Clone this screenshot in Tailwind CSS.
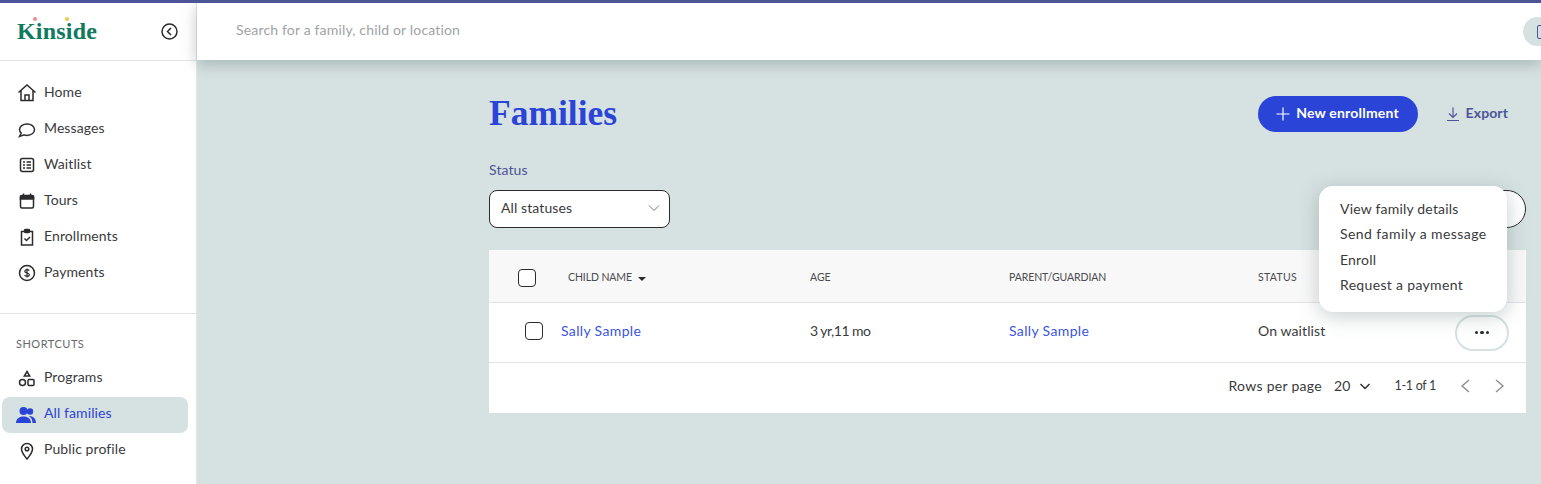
<!DOCTYPE html>
<html lang="en">
<head>
  <meta charset="UTF-8" />
  <title>Kinside - Families</title>
  <script src="https://cdn.jsdelivr.net/npm/@tailwindcss/browser@4"></script>
</head>
<body class="h-[484px] w-[1541px] overflow-hidden bg-[#d6e1e1] font-['Lato','Liberation_Sans',sans-serif] text-[14px] tracking-[0.1px] text-[#3a3a3c]">
  <div class="h-[3px] bg-[#4c5599]"></div>
  <div class="flex h-[481px]">
    <!-- Sidebar -->
    <aside class="w-[197px] shrink-0 border-r border-[#e3e7e8] bg-white">
      <div class="flex h-[58px] items-center justify-between border-b border-[#e0e4e6] pl-[17px] pr-[18px]">
        <div class="relative pb-[1px] font-['Liberation_Serif',serif] text-[24px] font-bold leading-none tracking-[0.2px] text-[#0f7a5d]">
          Kinside
          <span class="absolute left-[16px] top-[-2px] h-[4px] w-[4px] rounded-full bg-[#f08a8a]"></span>
          <span class="absolute left-[48px] top-[-2px] h-[4px] w-[4px] rounded-full bg-[#f5c842]"></span>
        </div>
        <svg class="h-[17px] w-[17px]" viewBox="0 0 17 17" fill="none" stroke="#2b2b2d" stroke-width="1.500"><circle cx="8.500" cy="8.500" r="7.500"/><path d="M10 5l-3.500 3.500L10 12"/></svg>
      </div>
      <nav class="pt-[14px]">
        <a class="flex h-[36px] items-center gap-[8px] pl-[18px]">
          <svg class="h-[18px] w-[18px]" viewBox="0 0 18 18" fill="none" stroke="#2b2b2d" stroke-width="1.500"><path d="M0.500 8.500L9 1l8.500 7.500M3 6.500V16.500h12V6.500M7 16.500v-5.500h4v5.500"/></svg><span class="pb-[4px]">Home</span>
        </a>
        <a class="flex h-[36px] items-center gap-[8px] pl-[18px]">
          <svg class="h-[18px] w-[18px]" viewBox="0 0 18 18" fill="none" stroke="#2b2b2d" stroke-width="1.500"><path d="M1.500 16.500l1.700-3.400C2 12 1.500 10.900 1.500 9.700 1.500 6.500 4.800 4 9 4s7.500 2.500 7.500 5.700-3.300 5.700-7.500 5.700c-1 0-2-.2-2.800-.5z"/></svg><span class="pb-[4px]">Messages</span>
        </a>
        <a class="flex h-[36px] items-center gap-[8px] pl-[18px]">
          <svg class="h-[18px] w-[18px]" viewBox="0 0 18 18" fill="none" stroke="#2b2b2d" stroke-width="1.500"><rect x="2.500" y="2.500" width="13" height="13" rx="2"/><path d="M5 6h2M5 9h2M5 12h2M8.500 6h4.500M8.500 9h4.500M8.500 12h4.500"/></svg><span class="pb-[4px]">Waitlist</span>
        </a>
        <a class="flex h-[36px] items-center gap-[8px] pl-[18px]">
          <svg class="h-[18px] w-[18px]" viewBox="0 0 18 18" fill="none" stroke="#2b2b2d" stroke-width="1.500"><rect x="2.500" y="3.500" width="13" height="12.500" rx="1.500"/><path d="M2.500 4.200h13V7h-13z" fill="#2b2b2d"/><path d="M5.500 1.500v2.500M12.500 1.500v2.500"/></svg><span class="pb-[4px]">Tours</span>
        </a>
        <a class="flex h-[36px] items-center gap-[8px] pl-[18px]">
          <svg class="h-[18px] w-[18px]" viewBox="0 0 18 18" fill="none" stroke="#2b2b2d" stroke-width="1.500"><path d="M6.500 3.500H3.500v13.500h11V3.500h-3"/><rect x="6.500" y="1.500" width="5" height="3" rx="1" fill="#2b2b2d"/><path d="M6.500 10.500l2 2 3.500-3.500"/></svg><span class="pb-[4px]">Enrollments</span>
        </a>
        <a class="flex h-[36px] items-center gap-[8px] pl-[18px]">
          <svg class="h-[18px] w-[18px]" viewBox="0 0 18 18" fill="none" stroke="#2b2b2d" stroke-width="1.500"><circle cx="9" cy="9" r="7.500"/><path d="M11.200 6.800C10.800 6 10 5.700 9 5.700c-1.200 0-2.200.6-2.200 1.600 0 2.300 4.500 1.100 4.500 3.400 0 1-1 1.600-2.300 1.600-1.100 0-2-.4-2.400-1.300M9 4.500v9" stroke-width="1.200"/></svg><span class="pb-[4px]">Payments</span>
        </a>
      </nav>
      <div class="mt-[22px] border-t border-[#e0e4e6] pt-[23px]">
        <div class="pl-[16px] text-[11px] leading-[14px] tracking-[0.5px] text-[#66686b]">SHORTCUTS</div>
        <a class="mt-[10px] flex h-[36px] items-center gap-[8px] pl-[18px]">
          <svg class="h-[18px] w-[18px]" viewBox="0 0 18 18" fill="none" stroke="#2b2b2d" stroke-width="1.500"><path d="M9 1.500l2.700 4.500H6.300z"/><circle cx="4.500" cy="12.500" r="3"/><rect x="10" y="9.500" width="6" height="6" rx="1"/></svg><span class="pb-[6px]">Programs</span>
        </a>
        <a class="ml-[2px] flex h-[36px] w-[186px] items-center gap-[8px] rounded-[8px] bg-[#d6e1e1] pl-[15px] text-[#2b44d8]">
          <svg class="ml-[-1px] h-[20px] w-[20px] shrink-0" viewBox="0 0 20 20" fill="#2b44d8"><circle cx="7.500" cy="6" r="4"/><circle cx="14" cy="6.500" r="3.200"/><path d="M0 18c0-4 3-6.500 7.500-6.500S15 14 15 18z"/><path d="M13 11c4 0 7 2.500 7 7h-3.500c0-3-1-5.200-3.500-7z"/></svg><span class="pb-[6px]">All families</span>
        </a>
        <a class="flex h-[36px] items-center gap-[8px] pl-[18px]">
          <svg class="h-[18px] w-[18px]" viewBox="0 0 18 18" fill="none" stroke="#2b2b2d" stroke-width="1.500"><path d="M9 17c-3-3.500-5.500-6.500-5.500-10a5.500 5.500 0 0 1 11 0c0 3.500-2.500 6.500-5.500 10z"/><circle cx="9" cy="7" r="1.800"/></svg><span class="pb-[6px]">Public profile</span>
        </a>
      </div>
    </aside>

    <!-- Main -->
    <main class="relative min-w-0 flex-1">
      <header class="relative z-10 flex h-[57px] items-center justify-between bg-white pl-[39px] shadow-[0_4px_14px_rgba(90,115,115,0.4)]">
        <span class="pb-[4px] tracking-[0.17px] text-[#a0a3a6]">Search for a family, child or location</span>
        <div class="mr-[-26px] flex h-[29px] w-[44px] items-center rounded-l-full bg-[#d6e1e1] pl-[14px]">
          <span class="h-[14px] w-[14px] rounded-[2px] border border-[#4c5599]"></span>
        </div>
      </header>

      <div class="pl-[292px] pr-[15px]">
        <div class="flex h-[72px] items-center justify-between pt-[36px]">
          <h1 class="font-['Liberation_Serif',serif] text-[35.500px] font-bold leading-none tracking-normal text-[#2b44d8]">Families</h1>
          <div class="flex items-center">
            <button class="flex h-[36px] w-[160px] items-center justify-center gap-[6px] rounded-full bg-[#2b44d8] font-bold tracking-[0.2px] text-white">
              <svg class="h-[14px] w-[14px]" viewBox="0 0 14 14" stroke="#fff" stroke-width="1.200"><path d="M7 0.500v13M0.500 7h13"/></svg><span class="pb-[4px] pt-[1px]">New enrollment</span>
            </button>
            <button class="ml-[28px] mr-[18px] flex items-center gap-[6px] font-bold text-[#4c5599]">
              <svg class="h-[14px] w-[14px]" viewBox="0 0 14 14" fill="none" stroke="#4c5599" stroke-width="1.200"><path d="M7 0.500v9.500M3 6.500L7 10.500l4-4M1 13.500h12"/></svg><span class="pb-[4px]">Export</span>
            </button>
          </div>
        </div>

        <div class="mt-[29px] leading-[18px] text-[#4c5599]">Status</div>
        <div class="mt-[11px] flex items-center justify-between">
          <div class="flex h-[38px] w-[181px] items-center justify-between rounded-[8px] border border-[#2b2b2d] bg-white pl-[11px] pr-[9px]">
            <span class="pb-[4px]">All statuses</span>
            <svg class="mb-[2px] h-[12px] w-[12px]" viewBox="0 0 12 12" fill="none" stroke="#77797c" stroke-width="1"><path d="M1 3.500l5 5 5-5"/></svg>
          </div>
          <div class="h-[38px] w-[200px] rounded-full border border-[#2b2b2d] bg-white"></div>
        </div>

        <!-- Table -->
        <div class="mt-[22px] bg-white">
          <div class="grid h-[53px] grid-cols-[321px_199px_249px_1fr] items-center border-b border-[#e2e2ea] bg-[#f8f8f8] pt-[4px] text-[10.500px] tracking-normal text-[#4a4b4e]">
            <div class="flex items-center pl-[29px]">
              <span class="h-[18px] w-[18px] rounded-[4px] border border-[#2b2b2d] bg-white"></span>
              <span class="ml-[32px] tracking-[-0.1px]">CHILD NAME</span>
              <span class="ml-[6px] mt-[2px] h-0 w-0 border-x-[4px] border-t-[4px] border-x-transparent border-t-[#2b2b2d]"></span>
            </div>
            <div>AGE</div>
            <div class="tracking-[-0.1px]">PARENT/GUARDIAN</div>
            <div class="tracking-[0.3px]">STATUS</div>
          </div>
          <div class="grid h-[60px] grid-cols-[321px_199px_249px_1fr] items-center border-b border-[#e2e2ea]">
            <div class="flex items-center pb-[4px] pl-[36px]">
              <span class="h-[18px] w-[18px] rounded-[4px] border border-[#2b2b2d] bg-white"></span>
              <span class="ml-[18px] tracking-[0.35px] text-[#3b55dc]">Sally Sample</span>
            </div>
            <div class="pb-[4px] tracking-[-0.5px]">3 yr,11 mo</div>
            <div class="pb-[4px] tracking-[0.35px] text-[#3b55dc]">Sally Sample</div>
            <div class="flex items-center justify-between pr-[17px]">
              <span class="pb-[4px]">On waitlist</span>
              <span class="flex h-[36px] w-[54px] items-center justify-center gap-[2px] rounded-full border-2 border-[#d6e1e1] bg-white">
                <span class="h-[3.500px] w-[3.500px] rounded-full bg-[#2b2b2d]"></span>
                <span class="h-[3.500px] w-[3.500px] rounded-full bg-[#2b2b2d]"></span>
                <span class="h-[3.500px] w-[3.500px] rounded-full bg-[#2b2b2d]"></span>
              </span>
            </div>
          </div>
          <div class="flex h-[50px] items-center justify-end pb-[4px] pr-[21px]">
            <span class="pb-[2px] tracking-[0.3px]">Rows per page</span>
            <span class="ml-[12px] pb-[2px]">20</span>
            <svg class="ml-[8px] h-[12px] w-[12px]" viewBox="0 0 12 12" fill="none" stroke="#2b2b2d" stroke-width="1.400"><path d="M1.500 4l4.500 4.500L10.500 4"/></svg>
            <span class="ml-[24px] text-[12.500px] tracking-[-0.3px]">1-1 of 1</span>
            <svg class="ml-[24px] h-[14px] w-[10px]" viewBox="0 0 10 14" fill="none" stroke="#8a8c8f" stroke-width="1.400"><path d="M9 1L2 7l7 6"/></svg>
            <svg class="ml-[25px] h-[14px] w-[10px]" viewBox="0 0 10 14" fill="none" stroke="#8a8c8f" stroke-width="1.400"><path d="M1 1l7 6-7 6"/></svg>
          </div>
        </div>
      </div>

      <!-- Row menu -->
      <div class="absolute left-[1122px] top-[183px] z-20 h-[126px] w-[188px] rounded-[14px] bg-white pl-[21px] pt-[10px] tracking-[0.2px] shadow-[0_4px_20px_rgba(90,115,115,0.35)]">
        <div class="leading-[25.300px]">View family details</div>
        <div class="leading-[25.300px] tracking-[0.42px]">Send family a message</div>
        <div class="leading-[25.300px]">Enroll</div>
        <div class="leading-[25.300px] tracking-[0.33px]">Request a payment</div>
      </div>
    </main>
  </div>
</body>
</html>
